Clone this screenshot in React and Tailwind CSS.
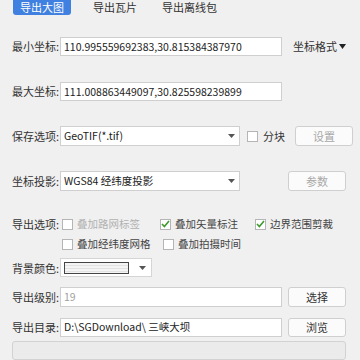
import React from "react";

const font = { fontFamily: '"Noto Sans CJK SC", "Noto Sans", sans-serif' };

const Label = ({ children }) => (
  <span className="w-[48px] shrink-0 text-[11px] text-[#333] whitespace-nowrap">
    {children}
  </span>
);

const Button = ({ children, disabled }) => (
  <div
    className={`ml-[6px] w-[58px] h-full flex items-center justify-center bg-[#fbfbfb] border border-[#cfcfcf] rounded-[3px] text-[11px] ${
      disabled ? "text-[#a8a8a8]" : "text-[#333]"
    }`}
  >
    {children}
  </div>
);

const Arrow = () => (
  <svg width="7" height="4" viewBox="0 0 7 4" className="shrink-0">
    <path d="M0 0h7L3.5 4z" fill="#555" />
  </svg>
);

const Check = ({ checked }) => (
  <div className="w-[11px] h-[11px] shrink-0 border border-[#b5b5b5] bg-white flex items-center justify-center">
    {checked && (
      <svg width="9" height="8" viewBox="0 0 9 8">
        <path d="M1 4l2.4 2.6L8 1" stroke="#3c9a2e" strokeWidth="1.6" fill="none" />
      </svg>
    )}
  </div>
);

const Option = ({ checked, disabled, w, children }) => (
  <div className={`flex items-center gap-[4px] ${w}`}>
    <Check checked={checked} />
    <span
      className={`text-[10.5px] whitespace-nowrap ${disabled ? "text-[#b0b0b0]" : "text-[#444]"}`}
    >
      {children}
    </span>
  </div>
);

export default function App() {
  return (
    <div
      className="w-[360px] h-[360px] bg-[#f0f0f0] overflow-hidden flex flex-col pl-[12px]"
      style={font}
    >
      {/* tabs */}
      <div className="h-[15px] flex items-end text-[11px] text-[#333]">
        <div className="ml-[1px] w-[58px] h-[20px] -mt-[5px] pt-[4px] bg-[#3f80e0] rounded-[3px] text-white flex items-center justify-center">
          导出大图
        </div>
        <span className="ml-[22px] leading-[15px]">导出瓦片</span>
        <span className="ml-[25px] leading-[15px]">导出离线包</span>
      </div>

      <div className="mt-[22px] h-[21px] flex items-center">
        <Label>最小坐标:</Label>
        <div className="w-[222px] h-full bg-white border border-[#cfcfcf] flex items-center pl-[3px] text-[10.5px] text-[#222]">
          110.995559692383,30.815384387970
        </div>
        <span className="ml-[11px] text-[11px] text-[#333] flex items-center gap-[2px]">
          坐标格式
          <svg width="7" height="5" viewBox="0 0 7 5">
            <path d="M0 0h7L3.5 5z" fill="#222" />
          </svg>
        </span>
      </div>

      <div className="mt-[26px] h-[21px] flex items-center">
        <Label>最大坐标:</Label>
        <div className="w-[222px] h-full bg-white border border-[#cfcfcf] flex items-center pl-[3px] text-[10.5px] text-[#222]">
          111.008863449097,30.825598239899
        </div>
      </div>

      <div className="mt-[25px] h-[22px] flex items-center">
        <Label>保存选项:</Label>
        <div className="w-[180px] h-full bg-white border border-[#cfcfcf] flex items-center justify-between pl-[3px] pr-[4px] text-[10.5px] text-[#222]">
          GeoTIF(*.tif)
          <Arrow />
        </div>
        <div className="ml-[7px] flex items-center gap-[5px]">
          <Check />
          <span className="text-[11px] text-[#333]">分块</span>
        </div>
        <div className="ml-[4px] h-full flex">
          <Button disabled>设置</Button>
        </div>
      </div>

      <div className="mt-[25px] h-[22px] flex items-center">
        <Label>坐标投影:</Label>
        <div className="w-[180px] h-full bg-white border border-[#cfcfcf] flex items-center justify-between pl-[3px] pr-[4px] text-[10.5px] text-[#222]">
          WGS84 经纬度投影
          <Arrow />
        </div>
        <div className="ml-[42px] h-full flex">
          <Button disabled>参数</Button>
        </div>
      </div>

      <div className="mt-[26px] h-[14px] flex items-center">
        <Label>导出选项:</Label>
        <div className="ml-[2px] flex items-center">
          <Option disabled w="w-[98px]">叠加路网标签</Option>
          <Option checked w="w-[95px]">叠加矢量标注</Option>
          <Option checked>边界范围剪裁</Option>
        </div>
      </div>

      <div className="mt-[6px] h-[14px] flex items-center">
        <div className="w-[48px]" />
        <div className="ml-[2px] flex items-center">
          <Option w="w-[101px]">叠加经纬度网格</Option>
          <Option>叠加拍摄时间</Option>
        </div>
      </div>

      <div className="mt-[7px] h-[21px] flex items-center">
        <Label>背景颜色:</Label>
        <div className="w-[92px] h-full bg-white border border-[#d5d5d5] flex items-center pl-[3px] pr-[5px] justify-between">
          <div className="w-[65px] h-[12px] border border-[#444] bg-[repeating-linear-gradient(180deg,#f4f4f4_0px,#f4f4f4_2px,#e2e2e2_2px,#e2e2e2_3px)]" />
          <Arrow />
        </div>
      </div>

      <div className="mt-[10px] h-[21px] flex items-center">
        <Label>导出级别:</Label>
        <div className="w-[222px] h-full bg-white border border-[#cfcfcf] flex items-center pl-[3px] text-[10.5px] text-[#a0a0a0]">
          19
        </div>
        <Button>选择</Button>
      </div>

      <div className="mt-[11px] h-[21px] flex items-center">
        <Label>导出目录:</Label>
        <div className="w-[222px] h-full bg-white border border-[#cfcfcf] flex items-center pl-[3px] text-[10.5px] text-[#222] whitespace-nowrap">
          D:\SGDownload\ 三峡大坝
        </div>
        <Button>浏览</Button>
      </div>

      <div className="mt-[4px] w-[334px] h-[21px] bg-[#ebebeb] border border-[#d2d2d2] rounded-[3px]" />
    </div>
  );
}
